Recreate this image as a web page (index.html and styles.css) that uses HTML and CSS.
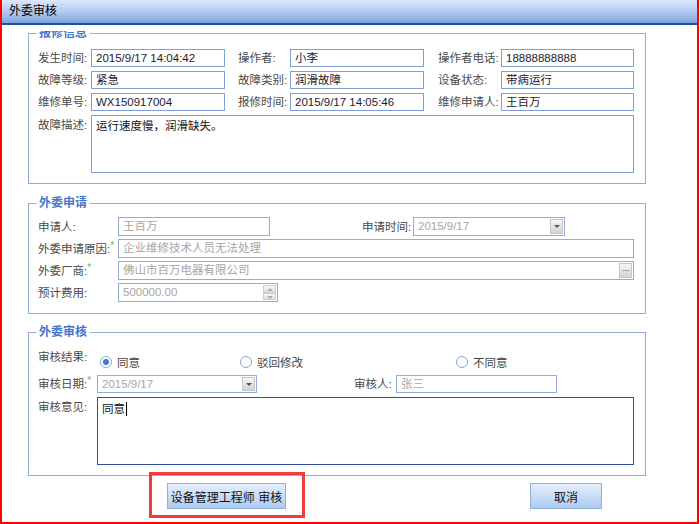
FILE: index.html
```html
<!DOCTYPE html>
<html>
<head>
    <meta charset="utf-8">
    <title>外委审核</title>
    <link rel="stylesheet" href="styles.css">
</head>
<body>
    <div class="window">
        <div class="titlebar">外委审核</div>
        <div class="viewport">
            <fieldset class="group group-repair">
                <legend>报修信息</legend>
                <div class="rows rows-repair">
                    <div class="row">
                        <span class="lbl lbl-r1">发生时间:</span>
                        <span class="field f-r">2015/9/17 14:04:42</span>
                        <span class="lbl lbl-r2">操作者:</span>
                        <span class="field f-r">小李</span>
                        <span class="lbl lbl-r3">操作者电话:</span>
                        <span class="field f-r3">18888888888</span>
                    </div>
                    <div class="row">
                        <span class="lbl lbl-r1">故障等级:</span>
                        <span class="field f-r">紧急</span>
                        <span class="lbl lbl-r2">故障类别:</span>
                        <span class="field f-r">润滑故障</span>
                        <span class="lbl lbl-r3">设备状态:</span>
                        <span class="field f-r3">带病运行</span>
                    </div>
                    <div class="row">
                        <span class="lbl lbl-r1">维修单号:</span>
                        <span class="field f-r">WX150917004</span>
                        <span class="lbl lbl-r2">报修时间:</span>
                        <span class="field f-r">2015/9/17 14:05:46</span>
                        <span class="lbl lbl-r3">维修申请人:</span>
                        <span class="field f-r3">王百万</span>
                    </div>
                    <div class="row row-top">
                        <span class="lbl lbl-r1">故障描述:</span>
                        <div class="memo memo-repair">运行速度慢，润滑缺失。</div>
                    </div>
                </div>
            </fieldset>

            <fieldset class="group group-apply">
                <legend>外委申请</legend>
                <div class="rows rows-apply">
                    <div class="row">
                        <span class="lbl lbl-a1">申请人:</span>
                        <span class="field disabled f-a">王百万</span>
                        <span class="lbl lbl-a2">申请时间:</span>
                        <span class="field disabled f-a">2015/9/17<span class="drop"><i class="tri"></i></span></span>
                    </div>
                    <div class="row">
                        <span class="lbl lbl-a1">外委申请原因:<span class="req">*</span></span>
                        <span class="field disabled f-wide">企业维修技术人员无法处理</span>
                    </div>
                    <div class="row">
                        <span class="lbl lbl-a1">外委厂商:<span class="req">*</span></span>
                        <span class="field disabled f-wide f-vendor">佛山市百万电器有限公司<span class="drop dots">···</span></span>
                    </div>
                    <div class="row">
                        <span class="lbl lbl-a1">预计费用:</span>
                        <span class="field disabled f-money">500000.00<span class="spin"><i class="spin-up"></i><i class="spin-down"></i></span></span>
                    </div>
                </div>
            </fieldset>

            <fieldset class="group group-review">
                <legend>外委审核</legend>
                <div class="rows rows-review">
                    <div class="row row-radio">
                        <span class="lbl lbl-v1 lbl-top">审核结果:</span>
                        <label class="opt opt1"><span class="radio checked"></span>同意</label>
                        <label class="opt opt2"><span class="radio"></span>驳回修改</label>
                        <label class="opt"><span class="radio"></span>不同意</label>
                    </div>
                    <div class="row">
                        <span class="lbl lbl-v1">审核日期:<span class="req">*</span></span>
                        <span class="field disabled f-date">2015/9/17<span class="drop"><i class="tri"></i></span></span>
                        <span class="lbl lbl-v2">审核人:</span>
                        <span class="field disabled f-reviewer">张三</span>
                    </div>
                    <div class="row row-top">
                        <span class="lbl lbl-v1">审核意见:</span>
                        <div class="memo memo-review">同意<span class="caret"></span></div>
                    </div>
                </div>
            </fieldset>

            <div class="actions">
                <div class="mark">
                    <button class="btn btn-approve">设备管理工程师 审核</button>
                </div>
                <button class="btn btn-cancel">取消</button>
            </div>
        </div>
    </div>
</body>
</html>
```

FILE: styles.css
```css
body {
    margin: 0;
    font-family: "Liberation Sans", "Noto Sans CJK SC", sans-serif;
    font-size: 11.5px;
    color: #4a4a4a;
    background: #fff;
}
.window {
    width: 699px;
    height: 524px;
    box-sizing: border-box;
    border: 2px solid #f00;
    border-top: 0;
    display: flex;
    flex-direction: column;
}
.titlebar {
    height: 23px;
    line-height: 23px;
    padding-left: 7px;
    color: #000;
    font-size: 12px;
    border-bottom: 2px solid #1f4fa6;
    background: linear-gradient(#dce8fa, #b3cbf0 50%, #7ea4dd);
}
.viewport {
    flex: 1;
    margin-top: 6px;
    overflow: hidden;
}

/* group boxes */
.group {
    margin: 0 51px 0 26px;
    padding: 8px 11px 10px 9px;
    border: 1px solid #8eabdc;
    min-width: 0;
}
.group legend {
    margin-left: -2px;
    padding: 0 3px;
    line-height: 15px;
    font-size: 12px;
    font-weight: bold;
    color: #4477cc;
}
.group-repair { margin-top: -5px; }
.group-apply { margin-top: 12px; padding-top: 6px; padding-bottom: 11px; }
.group-review { margin-top: 11px; }

.rows {
    display: flex;
    flex-direction: column;
    gap: 4px;
}
.rows-apply { gap: 3px; }
.row {
    display: flex;
    align-items: center;
}
.row-top { align-items: flex-start; }
.row-radio { height: 23px; }

.lbl {
    flex: none;
    white-space: nowrap;
    line-height: 18px;
}
.row-top .lbl { line-height: 20px; }
.lbl-top { align-self: flex-start; }
.req {
    color: #5cb85c;
    font-size: 10px;
    vertical-align: top;
    line-height: 12px;
}

/* columns */
.lbl-r1 { width: 53px; }
.lbl-r2 { width: 52px; margin-left: 13px; }
.lbl-r3 { width: 63px; margin-left: 14px; }
.f-r { width: 134px; }
.f-r3 { width: 133px; }
.lbl-a1 { width: 80px; }
.lbl-a2 { width: 51px; margin-left: 92px; }
.f-a { width: 152px; }
.f-wide { width: 516px; }
.f-money { width: 160px; }
.lbl-v1 { width: 59px; }
.lbl-v2 { width: 42px; margin-left: 97px; }
.f-date { width: 160px; }
.f-reviewer { width: 161px; }

/* inputs */
.field {
    flex: none;
    position: relative;
    box-sizing: border-box;
    height: 18px;
    line-height: 16px;
    padding: 0 4px;
    border: 1px solid #809fd6;
    color: #1c1c2e;
    background: #fff;
    white-space: nowrap;
    overflow: hidden;
}
.rows-apply .field { height: 19px; line-height: 17px; }
.field.disabled {
    color: #a6a6a6;
    border-color: #93acd9;
}
.drop {
    position: absolute;
    top: 1px;
    right: 1px;
    bottom: 1px;
    width: 13px;
    box-sizing: border-box;
    border: 1px solid #c6c6c6;
    background: linear-gradient(#f6f6f6, #d3d3d3);
    display: flex;
    align-items: center;
    justify-content: center;
}
.tri {
    width: 0;
    height: 0;
    border-left: 3px solid transparent;
    border-right: 3px solid transparent;
    border-top: 3px solid #555;
}
.dots {
    color: #666;
    font-size: 10px;
    letter-spacing: -1px;
    line-height: 10px;
}
.spin {
    position: absolute;
    top: 1px;
    right: 1px;
    bottom: 1px;
    width: 13px;
    display: flex;
    flex-direction: column;
}
.spin i {
    flex: 1;
    border: 1px solid #d0d0d0;
    background: linear-gradient(#f7f7f7, #e0e0e0);
    position: relative;
}
.spin i::after {
    content: "";
    position: absolute;
    left: 3px;
    top: 2px;
    border-left: 3px solid transparent;
    border-right: 3px solid transparent;
}
.spin-up::after { border-bottom: 3px solid #aaa; }
.spin-down::after { border-top: 3px solid #aaa; }

.memo {
    box-sizing: border-box;
    padding: 3px 4px;
    border: 1px solid #809fd6;
    color: #111;
    line-height: 14px;
}
.memo-repair { width: 543px; height: 58px; }
.memo-review {
    width: 537px;
    height: 68px;
    border-color: #2f4f91;
    padding-top: 4px;
}
.caret {
    display: inline-block;
    width: 1px;
    height: 14px;
    margin-left: 1px;
    vertical-align: -3px;
    background: #000;
}

/* radios */
.opt {
    display: flex;
    align-items: center;
    gap: 5px;
    margin-top: 4px;
    color: #444;
}
.opt1 { width: 140px; margin-left: 3px; }
.opt2 { width: 216px; }
.radio {
    width: 10px;
    height: 10px;
    border: 1px solid #86a4d8;
    border-radius: 50%;
    background: #fff;
    position: relative;
}
.radio.checked::after {
    content: "";
    position: absolute;
    left: 2px;
    top: 2px;
    width: 6px;
    height: 6px;
    border-radius: 50%;
    background: #3d7ad6;
}

/* buttons */
.actions {
    display: flex;
    align-items: flex-start;
    margin-top: 7px;
    padding-left: 165px;
}
.mark {
    position: relative;
    margin-right: 244px;
}
.mark::before {
    content: "";
    position: absolute;
    left: -18px;
    right: -19px;
    top: -11px;
    bottom: -9px;
    border: 3px solid #f03c3c;
}
.btn {
    height: 26px;
    border: 1px solid #8fb0e2;
    background: linear-gradient(#e4eefd, #c6dbf6 55%, #aecaf0);
    font-family: "Liberation Sans", "Noto Sans CJK SC", sans-serif;
    font-size: 12px;
    color: #111;
    padding: 0;
}
.btn-approve { width: 119px; }
.btn-cancel { width: 72px; }
```
